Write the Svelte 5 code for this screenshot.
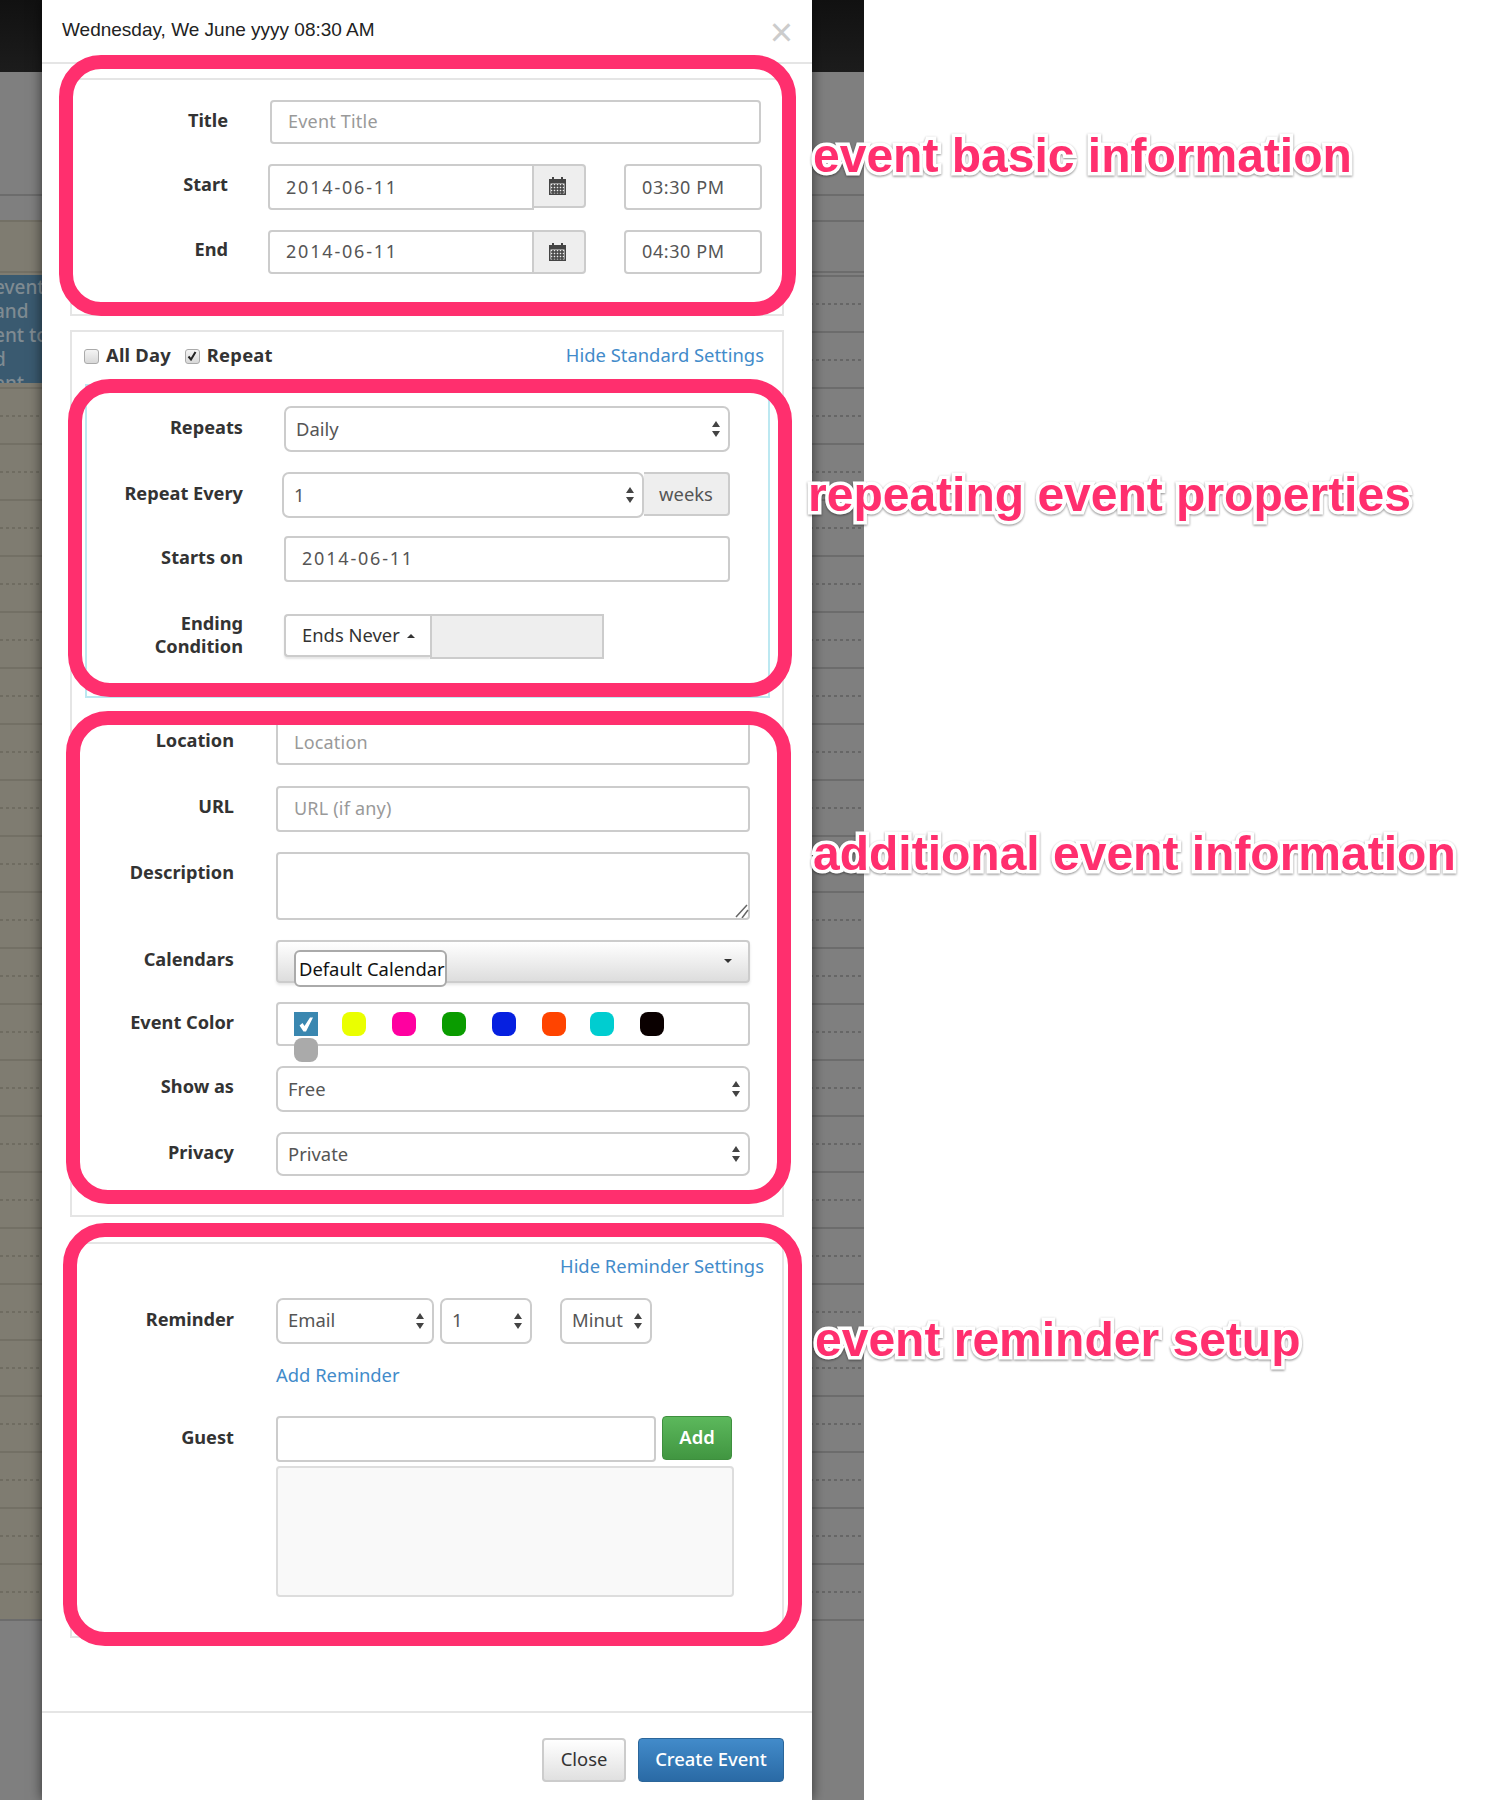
<script>
	const swatches = [
		{ color: '#3a87b0', checked: true, square: true },
		{ color: '#eaff00' },
		{ color: '#ff00a0' },
		{ color: '#0a9c00' },
		{ color: '#0620e0' },
		{ color: '#ff4400' },
		{ color: '#00cdd0' },
		{ color: '#0a0000' }
	];

	const notes = [
		{ text: 'event basic information', x: 813, y: 126 },
		{ text: 'repeating event properties', x: 808, y: 465 },
		{ text: 'additional event information', x: 813, y: 824 },
		{ text: 'event reminder setup', x: 815, y: 1310 }
	];

	const boxes = [
		{ x: 59, y: 55, w: 737, h: 261 },
		{ x: 68, y: 379, w: 724, h: 318 },
		{ x: 66, y: 711, w: 725, h: 493 },
		{ x: 63, y: 1223, w: 739, h: 423 }
	];
</script>

{#snippet arrows()}
	<svg class="arrows" width="10" height="18" viewBox="0 0 10 18"><path d="M5 1 9 7H1zM5 17 1 11h8z" /></svg>
{/snippet}

{#snippet cal()}
	<svg width="17" height="18" viewBox="0 0 17 18">
		<path fill="#444" d="M3 0h2v2h7V0h2v2h3v16H0V2h3zM1.500 6.500v10h14v-10z" />
		<path stroke="#444" stroke-width="1.500" d="M2 9h13M2 12h13M2 15h13M4 7v10M7 7v10M10 7v10M13 7v10" />
	</svg>
{/snippet}

<div class="page">
	<div class="topbar"></div>
	<div class="calendar"></div>
	<div class="left-col"></div>
	<div class="event-block">
		<span>event</span>
		<span>and</span>
		<span>ent to</span>
		<span>d</span>
		<span>ent</span>
	</div>

	<div class="modal">
		<header>
			<h4>Wednesday, We June yyyy 08:30 AM</h4>
			<span class="close">×</span>
		</header>

		<fieldset class="basic">
			<div class="row title">
				<div class="lbl">Title</div>
				<input class="ctl grow" placeholder="Event Title" />
			</div>
			<div class="row start">
				<div class="lbl">Start</div>
				<input class="ctl date" value="2014-06-11" />
				<div class="addon cal">{@render cal()}</div>
				<input class="ctl time" value="03:30 PM" />
			</div>
			<div class="row end">
				<div class="lbl">End</div>
				<input class="ctl date" value="2014-06-11" />
				<div class="addon cal">{@render cal()}</div>
				<input class="ctl time" value="04:30 PM" />
			</div>
		</fieldset>

		<fieldset class="standard">
			<div class="checks">
				<span class="check"></span><b>All Day</b>
				<span class="check on"><svg width="10" height="10" viewBox="0 0 10 10"><path d="M1.500 5.500 4 8.500 8.500 1" fill="none" stroke="#222" stroke-width="2" /></svg></span><b>Repeat</b>
				<a href="#top">Hide Standard Settings</a>
			</div>
			<div class="repeat-box">
				<div class="row rp-repeats">
					<div class="lbl">Repeats</div>
					<div class="select wide"><span>Daily</span>{@render arrows()}</div>
				</div>
				<div class="row rp-every">
					<div class="lbl">Repeat Every</div>
					<div class="select every"><span>1</span>{@render arrows()}</div>
					<div class="addon weeks">weeks</div>
				</div>
				<div class="row rp-starts">
					<div class="lbl">Starts on</div>
					<input class="ctl wide date-text" value="2014-06-11" />
				</div>
				<div class="row rp-ending">
					<div class="lbl">Ending<br />Condition</div>
					<div class="ends">Ends Never <i class="caret up"></i></div>
					<div class="ends-box"></div>
				</div>
			</div>

			<div class="extra">
				<div class="row x-location">
					<div class="lbl">Location</div>
					<input class="ctl field" placeholder="Location" />
				</div>
				<div class="row x-url">
					<div class="lbl">URL</div>
					<input class="ctl field" placeholder="URL (if any)" />
				</div>
				<div class="row x-desc">
					<div class="lbl">Description</div>
					<div class="area">
						<textarea class="ctl field"></textarea>
						<svg class="grip" width="14" height="14" viewBox="0 0 14 14"><path d="M1 13 12 1M7 14 13 6" fill="none" stroke="#666" stroke-width="1.500" /></svg>
					</div>
				</div>
				<div class="row x-cals">
					<div class="lbl">Calendars</div>
					<div class="multi">
						<span class="chip">Default Calendar</span>
						<i class="caret down"></i>
					</div>
				</div>
				<div class="row x-color">
					<div class="lbl">Event Color</div>
					<div class="colors">
						{#each swatches as s}
							<span class="swatch" class:square={s.square} style="background:{s.color}">
								{#if s.checked}
									<svg width="18" height="18" viewBox="0 0 18 18"><path fill="#fff" d="M2.500 10.500 5.500 8 7.500 11 13 2.500h3L9 16.500H6.500z" /></svg>
								{/if}
							</span>
						{/each}
						<span class="swatch gray"></span>
					</div>
				</div>
				<div class="row x-show">
					<div class="lbl">Show as</div>
					<div class="select field"><span>Free</span>{@render arrows()}</div>
				</div>
				<div class="row x-privacy">
					<div class="lbl">Privacy</div>
					<div class="select field"><span>Private</span>{@render arrows()}</div>
				</div>
			</div>
		</fieldset>

		<fieldset class="reminder">
			<div class="hide-link"><a href="#top">Hide Reminder Settings</a></div>
			<div class="row r-row">
				<div class="lbl">Reminder</div>
				<div class="select r-email"><span>Email</span>{@render arrows()}</div>
				<div class="select r-num"><span>1</span>{@render arrows()}</div>
				<div class="select r-unit"><span>Minut</span>{@render arrows()}</div>
			</div>
			<div class="add-rem"><a href="#top">Add Reminder</a></div>
			<div class="row g-row">
				<div class="lbl">Guest</div>
				<input class="ctl guest" />
				<button class="btn add">Add</button>
			</div>
			<div class="guests"></div>
		</fieldset>

		<footer>
			<button class="btn plain">Close</button>
			<button class="btn primary">Create Event</button>
		</footer>
	</div>

	{#each boxes as b}
		<div class="ring" style="left:{b.x}px;top:{b.y}px;width:{b.w}px;height:{b.h}px"></div>
	{/each}
	{#each notes as n}
		<div class="note" style="left:{n.x}px;top:{n.y}px">{n.text}</div>
	{/each}
</div>

<style>
	:global(body) {
		margin: 0;
		background: #fff;
	}

	.page {
		position: relative;
		width: 864px;
		height: 1800px;
		background: #7f7f7f;
		font-family: "Noto Sans", sans-serif;
		font-size: 18.4px;
		color: #333;
	}

	.topbar {
		height: 72px;
		background: linear-gradient(#111, #1c1c1c);
	}

	/* calendar grid behind the dialog */
	.calendar {
		position: absolute;
		left: 0;
		right: 0;
		top: 72px;
		height: 1550px;
		background:
			linear-gradient(#6c6c6c, #6c6c6c) 0 122px / 100% 2px no-repeat,
			linear-gradient(#6c6c6c, #6c6c6c) 0 148px / 100% 2px no-repeat,
			linear-gradient(#6c6c6c, #6c6c6c) 0 199px / 100% 2px no-repeat,
			linear-gradient(#6c6c6c, #6c6c6c) 0 203px / 100% 2px no-repeat;
	}

	.calendar::before {
		content: "";
		position: absolute;
		inset: 259px 0 0 0;
		background: repeating-linear-gradient(to bottom, #6c6c6c 0 2px, transparent 2px 56px);
	}

	.calendar::after {
		content: "";
		position: absolute;
		inset: 231px 0 28px 0;
		background: repeating-linear-gradient(to right, #666 0 3px, transparent 3px 6px);
		-webkit-mask: repeating-linear-gradient(to bottom, #000 0 2px, transparent 2px 56px);
		mask: repeating-linear-gradient(to bottom, #000 0 2px, transparent 2px 56px);
	}

	.left-col {
		position: absolute;
		left: 0;
		top: 220px;
		width: 42px;
		height: 1399px;
		background: rgba(128, 120, 90, 0.35);
	}

	.event-block {
		position: absolute;
		left: 0;
		top: 275px;
		width: 42px;
		height: 108px;
		overflow: hidden;
		background: #3a5a70;
		color: #7f8b92;
		font-size: 19px;
		font-weight: 500;
		line-height: 24px;
	}

	.event-block span {
		display: block;
		margin-left: -6px;
		white-space: nowrap;
	}

	.modal {
		position: absolute;
		left: 42px;
		top: 0;
		width: 770px;
		height: 1800px;
		background: #fff;
		box-shadow: 0 0 12px rgba(0, 0, 0, 0.6);
	}

	header {
		display: flex;
		justify-content: space-between;
		height: 62px;
		border-bottom: 2px solid #e5e5e5;
		padding: 0 19px 0 20px;
	}

	h4 {
		margin: 18px 0 0;
		font: 19px/24px "Liberation Sans", sans-serif;
		color: #222;
	}

	.close {
		font: 40px/24px "Liberation Sans", sans-serif;
		color: #ccc;
		margin-top: 20px;
	}

	fieldset {
		display: block;
		box-sizing: border-box;
		width: 714px;
		margin: 0 0 0 28px;
		padding: 0;
		border: 2px solid #e5e5e5;
		min-inline-size: 0;
	}

	.basic {
		margin-top: 14px;
		height: 238px;
		padding-top: 20px;
	}

	.standard {
		margin-top: 14px;
		height: 887px;
	}

	.reminder {
		margin-top: 25px;
		height: 396px;
	}

	.row {
		display: flex;
		align-items: center;
	}

	.lbl {
		flex: none;
		box-sizing: border-box;
		font-size: 18.2px;
		font-weight: 700;
		text-align: right;
		line-height: 23px;
		padding-bottom: 4px;
		color: #333;
	}

	.ctl {
		box-sizing: border-box;
		height: 46px;
		border: 2px solid #ccc;
		border-radius: 4px;
		padding: 0 16px;
		font: inherit;
		font-size: 18px;
		color: #555;
		background: #fff;
		outline: none;
		letter-spacing: 0.6px;
	}

	.ctl::placeholder {
		color: #999;
		letter-spacing: 0.2px;
	}

	/* first group */
	.basic .lbl {
		width: 156px;
		margin-right: 40px;
	}

	.start .lbl,
	.end .lbl {
		padding-bottom: 6px;
	}

	.title .grow {
		width: 491px;
		height: 44px;
		margin-left: 2px;
		padding-bottom: 2px;
	}

	.start,
	.end {
		margin-top: 20px;
	}

	.date,
	.date-text {
		letter-spacing: 1.8px;
	}

	.date {
		width: 266px;
		border-radius: 4px 0 0 4px;
	}

	.end .ctl {
		height: 44px;
		padding-bottom: 2px;
	}

	.addon {
		box-sizing: border-box;
		display: flex;
		align-items: center;
		justify-content: center;
		background: #eee;
		border: 2px solid #ccc;
		border-left: 0;
		border-radius: 0 4px 4px 0;
		color: #555;
	}

	.addon.cal {
		width: 52px;
		height: 44px;
		align-self: flex-start;
		padding-right: 4px;
	}

	.time {
		width: 138px;
		margin-left: 38px;
	}

	/* second group */
	.checks {
		display: flex;
		align-items: center;
		box-sizing: border-box;
		height: 47px;
		padding: 0 18px 3px 12px;
	}

	.checks b {
		font-weight: 700;
		color: #333;
		letter-spacing: 0.2px;
	}

	.check {
		box-sizing: border-box;
		display: flex;
		align-items: center;
		justify-content: center;
		width: 15px;
		height: 15px;
		border: 1px solid #aaa;
		border-radius: 3px;
		background: linear-gradient(#f4f4f4, #d8d8d8);
		margin-right: 7px;
		margin-top: 4px;
	}

	.check.on {
		margin-left: 14px;
	}

	.checks a {
		margin-left: auto;
	}

	a {
		color: #428bca;
		text-decoration: none;
	}

	.repeat-box {
		box-sizing: border-box;
		margin: 5px 0 0 13px;
		width: 685px;
		height: 314px;
		border: 2px solid #bce8f1;
		padding-top: 20px;
	}

	.repeat-box .lbl {
		width: 156px;
		margin-right: 41px;
	}

	.select {
		box-sizing: border-box;
		display: flex;
		align-items: center;
		justify-content: space-between;
		height: 46px;
		border: 2px solid #ccc;
		border-radius: 7px;
		padding: 0 7px 0 10px;
		background: #fff;
		color: #555;
	}

	.select span {
		padding-bottom: 2px;
	}

	.arrows {
		fill: #444;
		flex: none;
	}

	.wide {
		width: 446px;
	}

	.rp-every {
		margin-top: 20px;
	}

	.every {
		width: 362px;
		margin-left: -2px;
	}

	.weeks {
		width: 86px;
		height: 44px;
		align-self: flex-start;
		padding-bottom: 2px;
	}

	.rp-starts {
		margin-top: 18px;
	}

	.rp-starts .ctl {
		padding-bottom: 3px;
	}

	.rp-ending {
		margin-top: 32px;
		align-items: flex-start;
	}

	.rp-ending .lbl {
		margin-top: -2px;
	}

	.ends {
		box-sizing: border-box;
		display: flex;
		align-items: center;
		gap: 7px;
		width: 146px;
		height: 43px;
		border: 2px solid #ccc;
		border-right: 0;
		border-radius: 4px 0 0 4px;
		padding: 0 0 3px 16px;
		background: #fff;
		box-shadow: 0 2px 2px rgba(0, 0, 0, 0.1);
	}

	.ends-box {
		box-sizing: border-box;
		width: 174px;
		height: 45px;
		background: #eee;
		border: 2px solid #ccc;
	}

	.caret {
		display: inline-block;
		width: 0;
		height: 0;
		border-left: 4px solid transparent;
		border-right: 4px solid transparent;
	}

	.caret.up {
		border-bottom: 4px solid #333;
		margin-top: 4px;
	}

	.caret.down {
		border-top: 4px solid #333;
		position: absolute;
		right: 16px;
		top: 17px;
	}

	/* third group, sits inside the same fieldset */
	.extra {
		margin-top: 21px;
	}

	.extra .lbl {
		width: 162px;
		margin-right: 42px;
	}

	.field {
		width: 474px;
	}

	.x-url {
		margin-top: 21px;
	}

	.x-url .ctl {
		padding-bottom: 3px;
	}

	.x-url .lbl,
	.x-show .lbl {
		padding-bottom: 6px;
	}

	.x-desc {
		margin-top: 20px;
		align-items: flex-start;
	}

	.x-desc .lbl {
		margin-top: 9px;
	}

	.area {
		position: relative;
	}

	textarea.field {
		height: 68px;
		resize: none;
		display: block;
	}

	.grip {
		position: absolute;
		right: 1px;
		bottom: 2px;
	}

	.x-cals {
		margin-top: 20px;
	}

	.multi {
		position: relative;
		box-sizing: border-box;
		width: 474px;
		height: 43px;
		border: 2px solid #ccc;
		border-radius: 4px;
		background: linear-gradient(#fff, #ddd);
		box-shadow: 0 2px 3px rgba(0, 0, 0, 0.1);
	}

	.chip {
		position: absolute;
		left: 16px;
		top: 8px;
		box-sizing: border-box;
		width: 153px;
		height: 37px;
		border: 2px solid #aaa;
		border-radius: 6px;
		background: #fff;
		color: #111;
		line-height: 33px;
		padding-left: 3px;
		white-space: nowrap;
	}

	.x-color {
		margin-top: 19px;
	}

	.colors {
		position: relative;
		box-sizing: border-box;
		width: 474px;
		height: 44px;
		border: 2px solid #ccc;
		border-radius: 4px;
		display: flex;
		padding: 8px 0 0 16px;
		gap: 26px;
	}

	.swatch {
		flex: none;
		width: 24px;
		height: 24px;
		border-radius: 8px;
		display: flex;
		align-items: center;
		justify-content: center;
	}

	.swatch.square {
		border-radius: 0;
	}

	.swatch:nth-child(2),
	.swatch:nth-child(7) {
		margin-left: -2px;
	}

	.swatch.gray {
		position: absolute;
		left: 16px;
		top: 34px;
		margin: 0;
		background: #aaa;
	}

	.x-show {
		margin-top: 20px;
	}

	.x-privacy {
		margin-top: 20px;
	}

	.x-privacy .select {
		height: 44px;
	}

	/* reminder group */
	.hide-link {
		text-align: right;
		padding: 10px 18px 2px 0;
		line-height: 24px;
	}

	.reminder .lbl {
		width: 162px;
		margin-right: 42px;
	}

	.r-row {
		margin-top: 18px;
	}

	.r-row .select span {
		padding-bottom: 3px;
	}

	.r-email {
		width: 158px;
	}

	.r-num {
		width: 92px;
		margin-left: 6px;
	}

	.r-unit {
		width: 92px;
		margin-left: 28px;
	}

	.add-rem {
		margin: 19px 0 0 204px;
		line-height: 24px;
	}

	.g-row {
		margin-top: 29px;
	}

	.guest {
		width: 380px;
	}

	.btn {
		box-sizing: border-box;
		height: 44px;
		border-radius: 4px;
		font: inherit;
		padding: 0 0 3px;
	}

	.add {
		width: 70px;
		margin-left: 6px;
		align-self: flex-start;
		background: linear-gradient(#5cb85c, #419641);
		border: 1px solid #3e8f3e;
		color: #fff;
		font-weight: 600;
	}

	.guests {
		box-sizing: border-box;
		width: 458px;
		height: 131px;
		margin: 4px 0 0 204px;
		background: #f9f9f9;
		border: 2px solid #ddd;
		border-radius: 4px;
	}

	footer {
		position: absolute;
		left: 0;
		right: 0;
		top: 1711px;
		height: 87px;
		border-top: 2px solid #e5e5e5;
		display: flex;
		justify-content: flex-end;
		gap: 12px;
		padding: 25px 28px 0 0;
	}

	.plain {
		width: 84px;
		background: linear-gradient(#fff, #e0e0e0);
		border: 2px solid #ccc;
		color: #333;
	}

	.primary {
		width: 146px;
		background: linear-gradient(#428bca, #2a6aa5);
		border: 1px solid #2b669a;
		color: #fff;
		font-weight: 500;
	}

	/* annotations drawn over the screenshot */
	.ring {
		position: absolute;
		box-sizing: border-box;
		border: 14px solid #ff2f6e;
		border-radius: 42px;
		pointer-events: none;
	}

	.note {
		position: absolute;
		font: 700 48px/60px "Liberation Sans", sans-serif;
		color: #ff2f6e;
		white-space: nowrap;
		-webkit-text-stroke: 7px #fff;
		paint-order: stroke fill;
		filter: drop-shadow(0 1px 1px rgba(0, 0, 0, 0.45));
	}
</style>
